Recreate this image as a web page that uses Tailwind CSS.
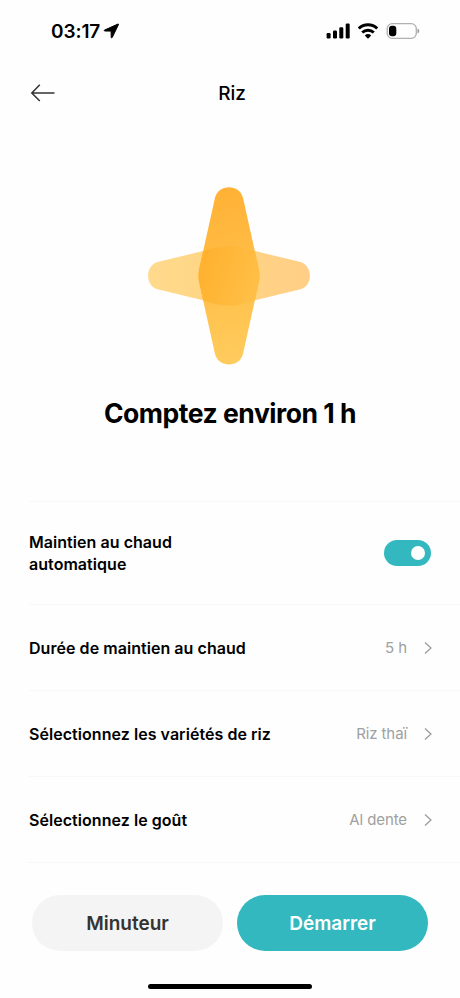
<!DOCTYPE html>
<html lang="fr">
<head>
<meta charset="utf-8">
<meta name="viewport" content="width=device-width, initial-scale=1">
<title>Riz</title>
<script src="https://cdn.jsdelivr.net/npm/@tailwindcss/browser@4"></script>
</head>
<body class="bg-[#fefefe] font-['Inter','Liberation_Sans',sans-serif] text-black">
<div class="flex h-[998px] w-[460px] flex-col overflow-hidden">
  <div class="flex h-[62px] shrink-0 items-center pl-[51px] pr-[40px]">
    <span class="pt-px text-[19px] font-semibold leading-none tracking-[-0.1px]">03:17</span>
    <svg class="ml-[3px]" width="17" height="16" viewBox="0 0 17 16"><path d="M15 1 1.600 7.100c-.6.3-.5.9.2.9l6.300.1.1 6.200c0 .7.700.800 1 .2L15.500 1.500c.1-.4-.1-.6-.5-.5z" stroke="#000" stroke-width="1" stroke-linejoin="round"/></svg>
    <div class="ml-auto flex items-center">
      <svg width="24" height="16" viewBox="0 0 24 16"><rect x="0.600" y="10" width="4" height="5.500" rx="1.200"/><rect x="7" y="7.500" width="4" height="8" rx="1.200"/><rect x="13.300" y="4.200" width="4" height="11.300" rx="1.200"/><rect x="19.700" y="0.500" width="4" height="15" rx="1.200"/></svg>
      <svg class="ml-[7px]" width="22" height="16" viewBox="0 0 22 16"><g fill="none" stroke="#000" stroke-width="3"><path d="M1.800 5.500a13.400 13.400 0 0 1 18.400 0"/><path d="M5.200 9.500a8.500 8.500 0 0 1 11.600 0"/></g><path d="m11 15.700-3.200-3.200a4.800 4.800 0 0 1 6.400 0z"/></svg>
      <svg class="ml-[7px]" width="34" height="18" viewBox="0 0 34 18"><rect x="1.200" y="1.700" width="29.100" height="14.600" rx="5" fill="none" stroke="#b0b0b0" stroke-width="1.300"/><rect x="3" y="3.700" width="7.300" height="10.600" rx="3"/><path d="M31.500 6.500c2.300.7 2.300 4.300 0 5z" fill="#999"/></svg>
    </div>
  </div>
  <header class="grid h-[62px] shrink-0 grid-cols-[84px_1fr_80px] items-center">
    <svg class="ml-[30px]" width="26" height="20" viewBox="0 0 26 20" fill="none" stroke="#333" stroke-width="1.500"><path d="M24.500 10H1.800M9.800 1.800 1.800 10l8 8"/></svg>
    <h1 class="text-center text-[19px] font-medium leading-none">Riz</h1>
  </header>
  <section class="flex h-[377px] shrink-0 flex-col items-center">
    <svg class="mt-[52px] mr-[2px] shrink-0" width="180" height="200" viewBox="139 176 180 200">
      <defs>
        <linearGradient id="h" x1="0" y1="0" x2="1" y2="0"><stop offset="0" stop-color="#ffda8d"/><stop offset=".5" stop-color="#ffd482"/><stop offset="1" stop-color="#ffce87"/></linearGradient>
        <linearGradient id="v" gradientUnits="userSpaceOnUse" x1="205" y1="200" x2="250" y2="355"><stop offset="0" stop-color="#ffb236"/><stop offset="1" stop-color="#ffcb5c"/></linearGradient>
        <linearGradient id="c" gradientUnits="userSpaceOnUse" x1="199" y1="270" x2="260" y2="290"><stop offset="0" stop-color="#ffb12f"/><stop offset="1" stop-color="#ffc048"/></linearGradient>
        <clipPath id="m"><path d="M214.900 198.200C218 183.500 240 183.500 243.100 198.200L258.600 268Q260.400 275.700 258.600 283.400L243.100 353.500C240 368.200 218 368.200 214.900 353.500L199.400 283.400Q197.600 275.700 199.400 268Z"/></clipPath>
      </defs>
      <path fill="url(#h)" d="M158.500 261.800 204 250.800Q229 241.500 254 250.800L299.500 261.800C313.400 265 313.400 286.400 299.500 289.600L254 300.500Q229 310.500 204 300.500L158.500 289.600C144.600 286.400 144.600 265 158.500 261.800Z"/>
      <g clip-path="url(#m)"><path fill="url(#v)" d="M190 180h80v190h-80z"/><path fill="url(#c)" d="M190 254.200 204 250.800Q229 241.500 254 250.800L268 254.200V297.200L254 300.500Q229 310.500 204 300.500L190 297.200Z"/></g>
    </svg>
    <h2 class="mt-[21px] text-[26.500px] font-bold leading-8 tracking-[-0.480px]">Comptez environ 1 h</h2>
  </section>
  <main class="shrink-0 text-[16px] font-semibold tracking-[0.050px]">
    <div class="ml-[29px] flex h-[103px] items-center justify-between border-t border-[#f8f8f8] pr-[29px]">
      <span class="mt-px w-[180px] leading-[21.500px]">Maintien au chaud automatique</span>
      <span class="flex h-[26px] w-[47px] items-center justify-end rounded-full bg-[#33b8bf] pr-[6px]"><i class="size-[14px] rounded-full bg-white"></i></span>
    </div>
    <div class="ml-[29px] flex h-[86px] items-center border-t border-[#f8f8f8] pr-[27px]">
      <span>Durée de maintien au chaud</span>
      <span class="ml-auto pt-[2px] text-[15px] font-normal tracking-[-0.100px] text-[#a0a0a0]">5 h</span>
      <svg class="ml-[16px]" width="10" height="14" viewBox="0 0 10 14" fill="none" stroke="#999" stroke-width="1.200"><path d="m2 1.500 6 5.500-6 5.500"/></svg>
    </div>
    <div class="ml-[29px] flex h-[86px] items-center border-t border-[#f8f8f8] pr-[27px]">
      <span>Sélectionnez les variétés de riz</span>
      <span class="ml-auto pt-[2px] text-[15px] font-normal tracking-[-0.100px] text-[#a0a0a0]">Riz thaï</span>
      <svg class="ml-[16px]" width="10" height="14" viewBox="0 0 10 14" fill="none" stroke="#999" stroke-width="1.200"><path d="m2 1.500 6 5.500-6 5.500"/></svg>
    </div>
    <div class="ml-[29px] flex h-[86px] items-center border-t border-[#f8f8f8] pr-[27px]">
      <span>Sélectionnez le goût</span>
      <span class="ml-auto pt-[2px] text-[15px] font-normal tracking-[-0.100px] text-[#a0a0a0]">Al dente</span>
      <svg class="ml-[16px]" width="10" height="14" viewBox="0 0 10 14" fill="none" stroke="#999" stroke-width="1.200"><path d="m2 1.500 6 5.500-6 5.500"/></svg>
    </div>
  </main>
  <footer class="ml-[26px] flex flex-1 flex-col border-t border-[#f8f8f8]">
    <div class="mt-[32px] flex gap-[14px] pl-[6px]">
      <button class="h-[56px] w-[191px] rounded-full bg-[#f4f4f4] pt-[2px] text-[19px] font-semibold text-[#333]">Minuteur</button>
      <button class="h-[56px] w-[191px] rounded-full bg-[#33b8bf] pt-[2px] text-[19px] font-semibold text-white">Démarrer</button>
    </div>
    <div class="ml-[122px] mt-[33px] h-[5px] w-[164px] rounded-full bg-black"></div>
  </footer>
</div>
</body>
</html>
